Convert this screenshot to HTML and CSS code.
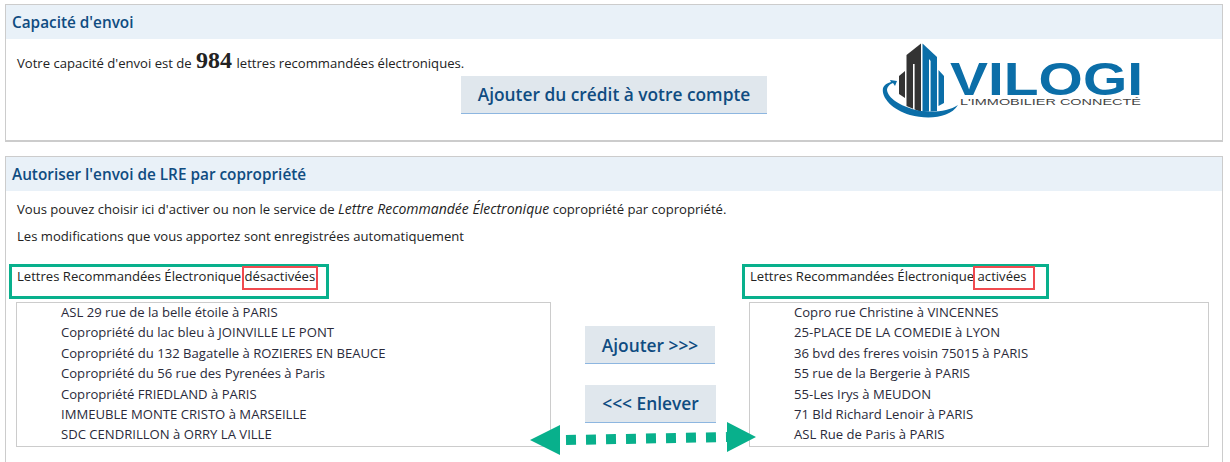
FILE: index.html
```
<!DOCTYPE html>
<html lang="fr">
<head>
<meta charset="utf-8">
<title>Lettres recommandées électroniques</title>
<link rel="stylesheet" href="styles.css">
</head>
<body>
<section class="panel panel-credit">
  <h2 class="panel-title">Capacité d'envoi</h2>
  <div class="credit-body">
    <div class="credit-left">
      <p class="credit-text">Votre capacité d'envoi est de <strong class="count">984</strong> lettres recommandées électroniques.</p>
      <button class="btn btn-credit">Ajouter du crédit à votre compte</button>
    </div>
    <svg class="logo" width="270" height="82" viewBox="0 0 270 82">
      <path d="M21 36 L27 31 V58 L21 54 Z" fill="#333"/>
      <path d="M28.5 15 L43 3.5 V72 L28.5 66 Z" fill="#333"/>
      <path d="M35 24 H36.6 V70 H35 Z" fill="#fff"/>
      <path d="M44.5 3.5 L59 17 V71 L44.5 72 Z" fill="#0b6ea8"/>
      <path d="M51 19 L52.6 21 V72 H51 Z" fill="#fff"/>
      <path d="M60.5 30 L66 36 V63 L60.5 66 Z" fill="#0b6ea8"/>
      <path d="M5 48 C3 58 15 70 32 75 C50 80 72 78 80 65 C70 72 52 73 38 70 C22 66 10 58 9 50 C9 47 12 44 15 43 L17 46 L19 41 L12 40 L13 42 C9 43 6 45 5 48 Z" fill="#0b6ea8"/>
      <text class="logo-name" x="72" y="55" textLength="193" lengthAdjust="spacingAndGlyphs">VILOGI</text>
      <text class="logo-sub" x="82" y="65" textLength="181" lengthAdjust="spacingAndGlyphs">L'IMMOBILIER CONNECTÉ</text>
    </svg>
  </div>
</section>

<section class="panel panel-lre">
  <h2 class="panel-title">Autoriser l'envoi de LRE par copropriété</h2>
  <div class="lre-body">
    <p class="intro">Vous pouvez choisir ici d'activer ou non le service de <em class="intro-em">Lettre Recommandée Électronique</em> copropriété par copropriété.</p>
    <p class="intro">Les modifications que vous apportez sont enregistrées automatiquement</p>
    <div class="columns">
      <div class="col col-off">
        <div class="col-label"><span class="green-box box-off"></span><span class="red-box red-off"></span>Lettres Recommandées Électronique désactivées</div>
        <ul class="list">
          <li>ASL 29 rue de la belle étoile à PARIS</li>
          <li>Copropriété du lac bleu à JOINVILLE LE PONT</li>
          <li>Copropriété du 132 Bagatelle à ROZIERES EN BEAUCE</li>
          <li>Copropriété du 56 rue des Pyrenées à Paris</li>
          <li>Copropriété FRIEDLAND à PARIS</li>
          <li>IMMEUBLE MONTE CRISTO à MARSEILLE</li>
          <li>SDC CENDRILLON à ORRY LA VILLE</li>
        </ul>
      </div>
      <div class="actions">
        <button class="btn btn-add">Ajouter &gt;&gt;&gt;</button>
        <button class="btn btn-remove">&lt;&lt;&lt; Enlever</button>
        <svg class="arrow" width="230" height="34" viewBox="0 0 230 34">
          <path d="M0 18 L30 3 V33 Z M197 0 L226 15 L197 30 Z" fill="#08b08c"/>
          <path d="M36 18 L197 15" stroke="#08b08c" stroke-width="10" stroke-dasharray="10 10"/>
        </svg>
      </div>
      <div class="col col-on">
        <div class="col-label"><span class="green-box box-on"></span><span class="red-box red-on"></span>Lettres Recommandées Électronique activées</div>
        <ul class="list">
          <li>Copro rue Christine à VINCENNES</li>
          <li>25-PLACE DE LA COMEDIE à LYON</li>
          <li>36 bvd des freres voisin 75015 à PARIS</li>
          <li>55 rue de la Bergerie à PARIS</li>
          <li>55-Les Irys à MEUDON</li>
          <li>71 Bld Richard Lenoir à PARIS</li>
          <li>ASL Rue de Paris à PARIS</li>
        </ul>
      </div>
    </div>
  </div>
</section>
</body>
</html>
```
FILE: styles.css
```
* { box-sizing: border-box; }
html, body { margin: 0; height: 462px; overflow: hidden; background: #fff; }
body { padding: 4px 5px 0; font-family: "Open Sans", sans-serif; font-size: 13.1px; color: #222; }
.panel { border: 1px solid #ccc; border-bottom-width: 2px; width: 1218px; }
.panel-credit { height: 138px; margin-bottom: 14px; }
.panel-lre { border-bottom: 0; height: 310px; }
.panel-title { margin: 0; height: 34px; padding-left: 6px; background: #e9f1f8; color: #0f4c81; font-size: 15.33px; font-weight: 600; line-height: 34px; }
.credit-body { display: flex; }
.credit-left { width: 860px; padding: 11px 0 0 11px; }
.credit-text { margin: 0; height: 26px; line-height: 27px; white-space: nowrap; }
.count { font-family: "Liberation Serif", serif; font-size: 24px; font-weight: 700; line-height: 20px; margin: 0 1px; }
.logo { margin: 1px 0 0 12px; flex: none; }
.logo-name { font-family: "Liberation Sans", sans-serif; font-size: 46.6px; font-weight: 700; fill: #0b6ea8; }
.logo-sub { font-family: "Liberation Sans", sans-serif; font-size: 9.6px; fill: #444; }
.btn { display: block; border: 0; border-bottom: 1px solid #8db6e0; background: #e0e7ed; color: #0f4c81; font-family: "Open Sans", sans-serif; font-weight: 600; padding: 0; height: 38px; font-size: 17.33px; }
.btn-credit { width: 306px; margin-left: 444px; padding-bottom: 2px; }
.btn-add { width: 130px; }
.btn-remove { width: 131px; padding-bottom: 2px; }
.lre-body { padding: 8px 0 0 10px; }
.intro { margin: 0 0 7px 1px; height: 20px; line-height: 20px; white-space: nowrap; }
.intro-em { font-size: 14px; }
.columns { display: flex; margin-top: 20px; }
.col { flex: none; }
.col-off { width: 535px; }
.col-on { width: 460px; }
.col-label { position: relative; height: 36px; line-height: 20px; padding-left: 1px; white-space: nowrap; }
.list { list-style: none; margin: 0; padding: 0 0 0 44px; height: 145px; border: 1px solid #ccc; }
.list li { height: 20.4px; line-height: 19.4px; white-space: nowrap; color: #2a2a3a; }
.actions { position: relative; width: 198px; flex: none; padding: 60px 0 0 34px; display: flex; flex-direction: column; gap: 21px; }
.arrow { position: absolute; left: -21px; top: 156px; }
.green-box { position: absolute; top: -2px; height: 35px; border: 3px solid #08b08c; }
.box-off { left: -7px; width: 320px; }
.box-on { left: -7px; width: 307px; }
.red-box { position: absolute; top: 0; height: 24px; border: 2px solid #f04a4f; }
.red-off { left: 226px; width: 76px; }
.red-on { left: 224px; width: 62px; }
```
